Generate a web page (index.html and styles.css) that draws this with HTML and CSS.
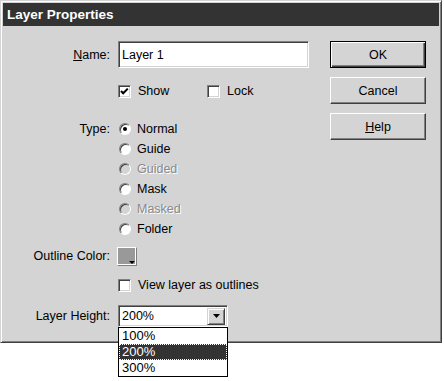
FILE: index.html
```html
<!DOCTYPE html>
<html lang="en">
<head>
    <meta charset="UTF-8">
    <title>Layer Properties</title>
    <link rel="stylesheet" href="styles.css">
</head>
<body>

    <div class="dialog">
        <div class="titlebar">Layer Properties</div>
        <div class="dialog-body">
            <div class="fields">
                <div class="row row-name">
                    <span class="lbl"><u>N</u>ame:</span>
                    <div class="textbox">Layer 1</div>
                </div>

                <div class="row row-show">
                    <span class="lbl"></span>
                    <span class="check-item show-item">
                        <span class="check">
                            <svg width="9" height="9" viewBox="0 0 9 9"><polyline points="1,4 3.2,6.3 7.8,1.6" fill="none" stroke="#000" stroke-width="2"/></svg>
                        </span>
                        Show
                    </span>
                    <span class="check-item">
                        <span class="check"></span>
                        Lock
                    </span>
                </div>

                <div class="type-group">
                    <div class="row radio-row"><span class="lbl">Type:</span><span class="radio on"></span>Normal</div>
                    <div class="row radio-row"><span class="lbl"></span><span class="radio"></span>Guide</div>
                    <div class="row radio-row disabled"><span class="lbl"></span><span class="radio"></span>Guided</div>
                    <div class="row radio-row"><span class="lbl"></span><span class="radio"></span>Mask</div>
                    <div class="row radio-row disabled"><span class="lbl"></span><span class="radio"></span>Masked</div>
                    <div class="row radio-row"><span class="lbl"></span><span class="radio"></span>Folder</div>
                </div>

                <div class="row row-outline">
                    <span class="lbl">Outline Color:</span>
                    <span class="swatch"></span>
                </div>

                <div class="row row-view">
                    <span class="lbl"></span>
                    <span class="check-item">
                        <span class="check"></span>
                        View layer as outlines
                    </span>
                </div>

                <div class="row row-height">
                    <span class="lbl">Layer Height:</span>
                    <div class="select">
                        <span class="select-value">200%</span>
                        <span class="select-btn">
                            <svg width="7" height="4" viewBox="0 0 7 4"><polygon points="0,0 7,0 3.5,4" fill="#000"/></svg>
                        </span>
                        <ul class="select-list">
                            <li>100%</li>
                            <li class="active">200%</li>
                            <li>300%</li>
                        </ul>
                    </div>
                </div>
            </div>

            <div class="buttons">
                <div class="btn default">OK</div>
                <div class="btn">Cancel</div>
                <div class="btn"><u>H</u>elp</div>
            </div>
        </div>
    </div>

</body>
</html>
```

FILE: styles.css
```css
body {
    margin: 0;
    min-height: 381px;
    background: #fff;
    font-family: "Liberation Sans", Arial, sans-serif;
    font-size: 12.5px;
    color: #000;
}
.dialog {
    width: 442px;
    height: 343px;
    box-sizing: border-box;
    padding: 2px;
    background: #d4d4d4;
    border: 1px solid;
    border-color: #d4d4d4 #404040 #404040 #d4d4d4;
    box-shadow: inset 1px 1px #fff, inset -1px -1px #808080;
}
.titlebar {
    height: 23px;
    line-height: 23px;
    padding-left: 4px;
    background: #333;
    color: #fff;
    font-weight: bold;
    font-size: 13.5px;
}
.dialog-body {
    display: flex;
}
.fields {
    width: 327px;
    padding-top: 15px;
}
.row {
    display: flex;
    align-items: center;
    height: 20px;
}
.lbl {
    flex: none;
    width: 107px;
    margin-right: 8px;
    text-align: right;
}
.row-name {
    height: 27px;
}
.textbox {
    width: 191px;
    height: 27px;
    box-sizing: border-box;
    padding-left: 3px;
    line-height: 27px;
    background: #fff;
    border: 1px solid;
    border-color: #808080 #fff #fff #808080;
    box-shadow: inset 1px 1px #404040, inset -1px -1px #d4d4d4;
}
.row-show {
    margin-top: 13px;
}
.check-item {
    display: flex;
    align-items: center;
    gap: 7px;
}
.show-item {
    width: 89px;
}
.check {
    width: 13px;
    height: 13px;
    box-sizing: border-box;
    display: flex;
    align-items: center;
    justify-content: center;
    background: #fff;
    border: 1px solid;
    border-color: #808080 #fff #fff #808080;
    box-shadow: inset 1px 1px #404040, inset -1px -1px #d4d4d4;
}
.type-group {
    margin-top: 18px;
}
.radio {
    width: 12px;
    height: 12px;
    box-sizing: border-box;
    margin: 0 6px 0 1px;
    border-radius: 50%;
    background: #fff;
    border: 1px solid;
    border-color: #808080 #fff #fff #808080;
    box-shadow: inset 1px 1px #404040;
    display: flex;
    align-items: center;
    justify-content: center;
}
.radio.on::after {
    content: "";
    width: 4px;
    height: 4px;
    border-radius: 50%;
    background: #000;
}
.disabled {
    color: #8a8a8a;
    text-shadow: 1px 1px #fff;
}
.disabled .radio {
    background: #d4d4d4;
}
.row-outline {
    margin-top: 7px;
}
.swatch {
    position: relative;
    width: 20px;
    height: 19px;
    box-sizing: border-box;
    margin-left: -1px;
    background: #999;
    border: 1px solid;
    border-color: #fff #808080 #808080 #fff;
    box-shadow: inset -1px -1px #fff;
}
.swatch::after {
    content: "";
    position: absolute;
    right: 1px;
    bottom: 1px;
    border-left: 3px solid transparent;
    border-right: 3px solid transparent;
    border-top: 3px solid #000;
}
.row-view {
    margin-top: 9px;
}
.row-height {
    margin-top: 10px;
    height: 22px;
}
.select {
    position: relative;
    width: 110px;
    height: 22px;
    box-sizing: border-box;
    display: flex;
    align-items: center;
    justify-content: space-between;
    padding: 0 2px 0 3px;
    background: #fff;
    border: 1px solid;
    border-color: #808080 #fff #fff #808080;
    box-shadow: inset 1px 1px #404040, inset -1px -1px #d4d4d4;
}
.select-btn {
    width: 18px;
    height: 17px;
    box-sizing: border-box;
    display: flex;
    align-items: center;
    justify-content: center;
    background: #d4d4d4;
    border: 1px solid;
    border-color: #d4d4d4 #404040 #404040 #d4d4d4;
    box-shadow: inset 1px 1px #fff, inset -1px -1px #808080;
}
.select-list {
    position: absolute;
    z-index: 2;
    left: -1px;
    top: 21px;
    width: 110px;
    box-sizing: border-box;
    margin: 0;
    padding: 0;
    list-style: none;
    background: #fff;
    border: 1px solid #000;
}
.select-list li {
    height: 16px;
    line-height: 16px;
    padding-left: 3px;
    font-size: 13px;
}
.select-list li.active {
    background: #333;
    color: #fff;
    outline: 1px dotted #fff;
    outline-offset: -1px;
}
.buttons {
    width: 96px;
    padding-top: 15px;
    display: flex;
    flex-direction: column;
    gap: 9px;
}
.btn {
    height: 27px;
    box-sizing: border-box;
    display: flex;
    align-items: center;
    justify-content: center;
    background: #d4d4d4;
    border: 1px solid;
    border-color: #fff #404040 #404040 #fff;
    box-shadow: inset -1px -1px #808080;
}
.btn.default {
    border-color: #000;
    box-shadow: inset 1px 1px #fff, inset -1px -1px #404040, inset -2px -2px #808080;
}
```
